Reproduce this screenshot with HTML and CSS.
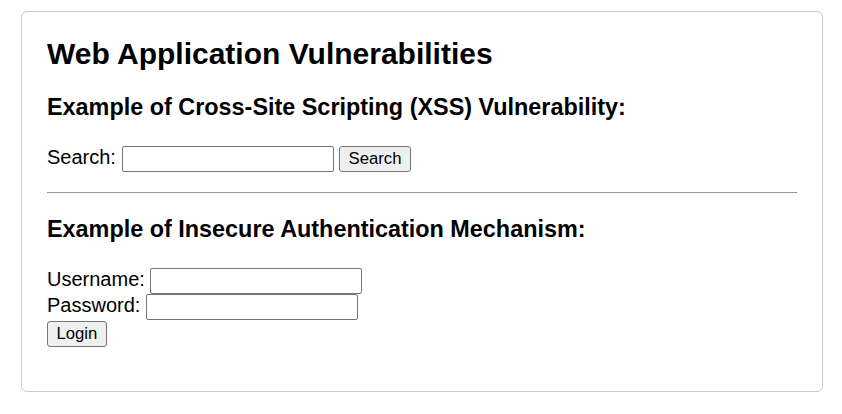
FILE: index.html
```html
<!DOCTYPE html>
<html lang="en">
<head>
<meta charset="utf-8">
<title>Web Application Vulnerabilities</title>
<link rel="stylesheet" href="styles.css">
</head>
<body>
<div class="card">
  <h1 class="title">Web Application Vulnerabilities</h1>
  <h2 class="section-title">Example of Cross-Site Scripting (XSS) Vulnerability:</h2>
  <form class="search-form">
    <label class="label" for="q">Search:</label> <input class="field" id="q" type="text"> <button class="btn" type="button">Search</button>
  </form>
  <hr class="divider">
  <h2 class="section-title">Example of Insecure Authentication Mechanism:</h2>
  <form class="login-form">
    <div class="row"><label class="label" for="u">Username:</label> <input class="field" id="u" type="text"></div>
    <div class="row"><label class="label" for="p">Password:</label> <input class="field" id="p" type="password"></div>
    <div class="row"><button class="btn" type="button">Login</button></div>
  </form>
</div>
</body>
</html>
```
FILE: styles.css
```css
html, body {
  margin: 0;
  padding: 0;
  background: #ffffff;
}
body {
  font-family: "Liberation Sans", Arial, sans-serif;
  font-size: 20px;
  color: #000000;
}
.card {
  box-sizing: border-box;
  width: 802px;
  margin: 11px 0 0 21px;
  padding: 25px;
  border: 1px solid #cccccc;
  border-radius: 6px;
}
.title {
  margin: 0 0 23.4px;
  font-size: 30px;
  font-weight: bold;
}
.section-title {
  margin: 0 0 24.3px;
  font-size: 23.4px;
  font-weight: bold;
}
.search-form {
  margin: 0;
}
.label {
  font-size: 20px;
}
.field {
  box-sizing: border-box;
  width: 212px;
  height: 26px;
  padding: 0 3px;
  border: 1px solid #767676;
  border-radius: 2px;
  font-family: "Liberation Sans", Arial, sans-serif;
  font-size: 16.7px;
  background: #ffffff;
  vertical-align: baseline;
}
.btn {
  box-sizing: border-box;
  height: 26px;
  padding: 0 8.5px;
  border: 1px solid #767676;
  border-radius: 3px;
  background: #efefef;
  font-family: "Liberation Sans", Arial, sans-serif;
  font-size: 16.7px;
  color: #000000;
}
.divider {
  margin: 20.4px 0 23.2px;
  border: 0;
  border-top: 1px solid #9a9a9a;
  height: 0;
}
.login-form {
  margin: 0 0 19px;
}
.row {
  height: 26.5px;
  line-height: 23px;
}
```
